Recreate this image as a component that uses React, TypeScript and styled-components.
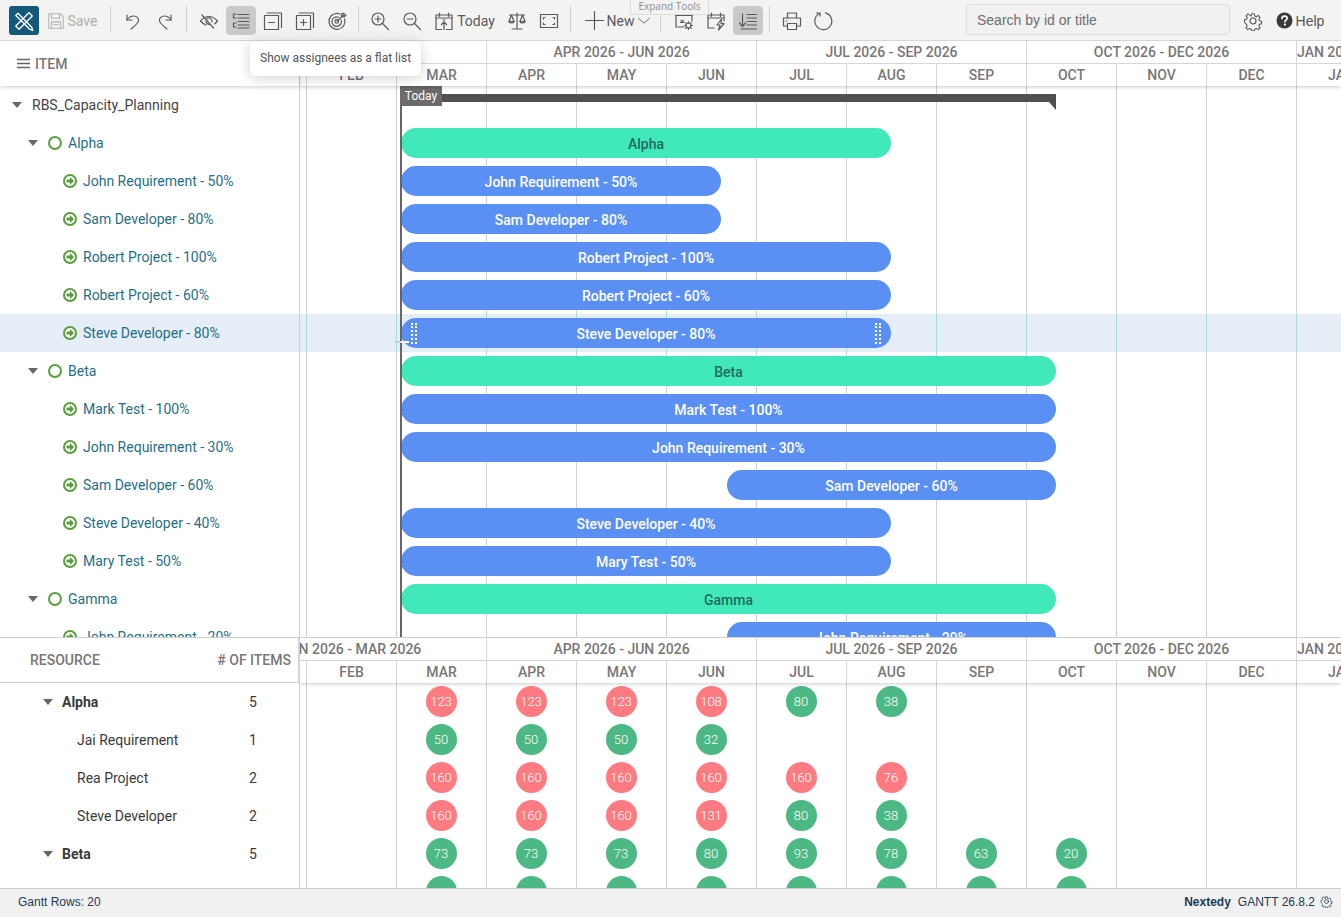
import * as React from "react";
import styled, { createGlobalStyle } from "styled-components";

const GlobalStyle = createGlobalStyle`
  html, body {
    margin: 0;
    padding: 0;
    background: #fff;
    font-family: Roboto, "Liberation Sans", sans-serif;
  }
`;

const Frame = styled.div`
  position: relative;
  width: 1341px;
  height: 917px;
  overflow: hidden;
  display: flex;
  flex-direction: column;
  background: #fff;
`;

/* toolbar */

const Toolbar = styled.header`
  flex: none;
  height: 41px;
  box-sizing: border-box;
  padding: 6px 11px 6px 9px;
  display: flex;
  align-items: flex-start;
  background: #f3f3f1;
  border-bottom: 1px solid #d6d6d4;
`;

const Logo = styled.div`
  width: 30px;
  height: 29px;
  border-radius: 3px;
  background: #14587c;
  display: flex;
  align-items: center;
  justify-content: center;
  margin-right: 2px;
`;

const Group = styled.div`
  display: flex;
  gap: 2px;
`;

const ToolButton = styled.button<{ $active?: boolean; $width?: number }>`
  width: ${(p) => p.$width ?? 30}px;
  height: 29px;
  box-sizing: border-box;
  padding: 0;
  margin: 0;
  display: flex;
  align-items: center;
  justify-content: center;
  gap: 3px;
  border: 1px solid ${(p) => (p.$active ? "#c9c9c9" : "#f1f1ef")};
  border-radius: 4px;
  background: ${(p) => (p.$active ? "#c9c9c9" : "transparent")};
  color: #5a5a5a;
  font: 400 14px Roboto, sans-serif;
`;

const SaveButton = styled(ToolButton)`
  color: #aeaeae;
  border-color: transparent;
  padding-left: 2px;
`;

const NewButton = styled(ToolButton)`
  padding-left: 5px;
`;

const Sep = styled.span<{ $before?: number; $after?: number }>`
  flex: none;
  width: 1px;
  height: 26px;
  background: #cfcfcd;
  margin: 0 ${(p) => p.$after ?? 6}px 0 ${(p) => p.$before ?? 6}px;
`;

const Search = styled.input`
  width: 264px;
  height: 31px;
  box-sizing: border-box;
  margin: -2px 8px 0 auto;
  padding: 0 10px;
  border: 1px solid #dedede;
  border-radius: 4px;
  background: #f1f1f1;
  font: 14px "Liberation Sans", Arial, sans-serif;
  &::placeholder {
    color: #6f6f6f;
    opacity: 1;
  }
`;

const HelpButton = styled(ToolButton)`
  font: 14px "Liberation Sans", Arial, sans-serif;
  color: #555;
`;

const TabHint = styled.div`
  position: absolute;
  left: 630px;
  top: 0;
  width: 79px;
  height: 15px;
  box-sizing: border-box;
  border: 1px solid #dcdcda;
  border-top: none;
  background: #f3f3f1;
  color: #8e8e8e;
  font: 10px/13px "Open Sans", sans-serif;
  text-align: center;
`;

const Tooltip = styled.div`
  position: absolute;
  left: 250px;
  top: 41px;
  width: 171px;
  height: 35px;
  box-sizing: border-box;
  padding: 9px 10px;
  border-radius: 6px;
  background: #fff;
  color: #555;
  font-size: 12px;
  line-height: 16px;
  white-space: nowrap;
  box-shadow: 0 2px 14px rgba(0, 0, 0, 0.18);
  z-index: 9;
`;

/* panes */

const Pane = styled.section<{ $height: number; $topLine?: boolean }>`
  flex: none;
  height: ${(p) => p.$height}px;
  box-sizing: border-box;
  display: flex;
  overflow: hidden;
  border-top: ${(p) => (p.$topLine ? "1px solid #cfcfcf" : "none")};
`;

const LeftColumn = styled.div`
  flex: none;
  width: 300px;
  box-sizing: border-box;
  display: flex;
  flex-direction: column;
  border-right: 1px solid #cfcfcf;
  background: #fff;
  position: relative;
  z-index: 3;
`;

const TimeColumn = styled.div`
  flex: none;
  width: 1041px;
  display: flex;
  flex-direction: column;
`;

const LeftHeader = styled.div<{ $heavy?: boolean }>`
  flex: none;
  height: 45px;
  box-sizing: border-box;
  display: flex;
  align-items: center;
  color: #777;
  font-size: 14px;
  font-weight: 500;
  position: relative;
  z-index: 2;
  background: #fff;
  box-shadow: 0 1px 4px rgba(0, 0, 0, 0.2);
  ${(p) => (p.$heavy ? "border-bottom: 1px solid #d0d0d0; border-right: 2px solid #d4d4d4; margin-right: -1px; box-shadow: none;" : "")}
`;

const ItemHeader = styled(LeftHeader)`
  padding-left: 17px;
  gap: 5px;
`;

const ResourceHeader = styled(LeftHeader)`
  padding: 0 7px 0 30px;
  justify-content: space-between;
`;

const ScaleBlock = styled.div`
  flex: none;
  height: 45px;
  position: relative;
  z-index: 2;
  overflow: hidden;
  background: #fff;
  box-shadow: 0 1px 4px rgba(0, 0, 0, 0.2);
`;

const ScaleRow = styled.div<{ $height: number }>`
  height: ${(p) => p.$height}px;
  box-sizing: border-box;
  display: flex;
  margin-left: -83px;
  width: 1124px;
  overflow: hidden;
`;

const QuarterRow = styled(ScaleRow)`
  border-bottom: 1px solid #d6d6d6;
`;

const ScaleCell = styled.div<{ $width: number; $start?: boolean }>`
  flex: none;
  width: ${(p) => p.$width}px;
  box-sizing: border-box;
  border-right: 1px solid #d6d6d6;
  color: #777;
  font-size: 14px;
  font-weight: 500;
  line-height: 22px;
  white-space: nowrap;
  overflow: hidden;
  text-align: ${(p) => (p.$start ? "left" : "center")};
`;

const TreeBody = styled.div`
  flex: 1;
  overflow: hidden;
`;

const TreeRow = styled.div<{ $indent: number; $selected?: boolean }>`
  height: 38px;
  box-sizing: border-box;
  padding-left: ${(p) => p.$indent}px;
  display: flex;
  align-items: center;
  gap: 6px;
  font-size: 14px;
  color: #1f6f88;
  background: ${(p) => (p.$selected ? "#e5edf6" : "transparent")};
`;

const RootRow = styled(TreeRow)`
  color: #444;
  gap: 10px;
`;

const Caret = styled.span<{ $gap?: number }>`
  flex: none;
  width: 0;
  height: 0;
  border-left: 5.5px solid transparent;
  border-right: 5.5px solid transparent;
  border-top: 6px solid #666;
  margin-right: ${(p) => p.$gap ?? 0}px;
`;

const Ring = styled.span`
  flex: none;
  width: 14px;
  height: 14px;
  box-sizing: border-box;
  border: 2px solid #5a9e3f;
  border-radius: 50%;
`;

const TimeBody = styled.div`
  position: relative;
  flex: 1;
  overflow: hidden;
  background-image: linear-gradient(to right, #d0d0d0 1px, transparent 1px);
  background-size: 90px 100%;
  background-position: 6px 0;
`;

const BarRow = styled.div<{ $selected?: boolean }>`
  height: 38px;
  display: flex;
  align-items: center;
  ${(p) =>
    p.$selected
      ? `background-color: #e5edf6;
         background-image: linear-gradient(to right, #a9dcd8 1px, transparent 1px);
         background-size: 90px 100%;
         background-position: 6px 0;`
      : ""}
`;

const Bar = styled.div<{ $offset: number; $width: number; $kind: "group" | "task" }>`
  position: relative;
  flex: none;
  margin-left: ${(p) => p.$offset}px;
  width: ${(p) => p.$width}px;
  height: 30px;
  border-radius: 15px;
  background: ${(p) => (p.$kind === "group" ? "#41e9ba" : "#5a8ff4")};
  color: ${(p) => (p.$kind === "group" ? "#1d6b5a" : "#fff")};
  font-size: 14px;
  font-weight: 500;
  line-height: 32px;
  text-align: center;
  white-space: nowrap;
`;

const Summary = styled.div`
  position: relative;
  flex: none;
  margin: -14px 0 0 101px;
  width: 655px;
  height: 8px;
  background: #505050;
  &::after {
    content: "";
    position: absolute;
    right: 0;
    top: 8px;
    border-top: 8px solid #505050;
    border-left: 7px solid transparent;
  }
`;

const TodayLine = styled.div`
  position: absolute;
  left: 100px;
  top: 0;
  bottom: 0;
  width: 2px;
  background: #666;
  z-index: 1;
`;

const TodayLabel = styled.div`
  position: absolute;
  left: 100px;
  top: 0;
  width: 42px;
  height: 20px;
  background: #6b6b6b;
  color: #fff;
  font-size: 12px;
  line-height: 21px;
  text-align: center;
  z-index: 1;
`;

const Grip = styled.span<{ $side: "left" | "right" }>`
  position: absolute;
  top: 5px;
  ${(p) => p.$side}: 10px;
  width: 2px;
  height: 21px;
  border-left: 2px dotted #fff;
  border-right: 2px dotted #fff;
`;

const LinkHandle = styled.span`
  position: absolute;
  left: -6px;
  top: 23px;
  width: 14px;
  height: 2px;
  background: linear-gradient(to right, #c9cfd4 45%, #fff 45%);
  z-index: 2;
`;

/* resource table */

const ResourceRow = styled.div<{ $indent: number; $strong?: boolean }>`
  height: 38px;
  box-sizing: border-box;
  padding-left: ${(p) => p.$indent}px;
  display: flex;
  align-items: center;
  font-size: 14px;
  font-weight: ${(p) => (p.$strong ? 700 : 400)};
  color: #3a3a3a;
`;

const ResourceName = styled.span`
  flex: 1;
`;

const ResourceCount = styled.span`
  flex: none;
  width: 50px;
  font-weight: 400;
`;

const HeatBody = styled.div`
  flex: 1;
  overflow: hidden;
  background-image: linear-gradient(to right, #d0d0d0 1px, transparent 1px);
  background-size: 90px 100%;
  background-position: 6px 0;
`;

const HeatRow = styled.div`
  height: 38px;
  display: grid;
  grid-template-columns: 6px repeat(12, 90px);
  align-items: start;
  justify-items: center;
`;

const Dot = styled.div<{ $hot: boolean; $column: number }>`
  grid-column: ${(p) => p.$column};
  grid-row: 1;
  width: 31px;
  height: 31px;
  margin-top: 3px;
  border-radius: 50%;
  background: ${(p) => (p.$hot ? "#ff7b81" : "#4cb883")};
  color: #fff;
  font-size: 13px;
  font-weight: 300;
  line-height: 31px;
  text-align: center;
`;

/* footer */

const Footer = styled.footer`
  flex: none;
  height: 29px;
  box-sizing: border-box;
  padding: 0 8px 3px 18px;
  display: flex;
  align-items: center;
  justify-content: space-between;
  border-top: 1px solid #cfcfcf;
  background: #f1f1f1;
  color: #1d3b52;
  font: 12px "Liberation Sans", Arial, sans-serif;
`;

const FooterRight = styled.div`
  display: flex;
  align-items: center;
  gap: 7px;
`;

const Brand = styled.b`
  font-weight: 700;
`;

const Version = styled.span`
  margin-right: -2px;
`;

/* icons */

const Svg = styled.svg<{ $color?: string }>`
  flex: none;
  display: block;
  fill: none;
  stroke: ${(p) => p.$color ?? "#5a5a5a"};
  stroke-width: 1.2;
  stroke-linecap: round;
  stroke-linejoin: round;
`;

type IconProps = { size?: number; color?: string; children: React.ReactNode };

const Icon = ({ size = 20, color, children }: IconProps) => (
  <Svg width={size} height={size} viewBox="0 0 20 20" $color={color}>
    {children}
  </Svg>
);

const LogoIcon = () => (
  <Icon size={22} color="#fff">
    <path d="M2.500 5l2-2L17 15.700l1 2.800-2.800-1z" />
    <path d="M14.500 2.500l3 3L5.500 17.500l-3-3z" />
  </Icon>
);
const SaveIcon = () => (
  <Icon size={18} color="#b4b4b4">
    <path d="M2 2h13l3 3v13H2z" />
    <path d="M5 2v5h9V2M5 18v-7h10v7M8 14h4" />
  </Icon>
);
const UndoIcon = () => (
  <Icon>
    <path d="M4 4v5h5" />
    <path d="M4 9c2-3 4-4 6.500-4 3.500 0 5.500 2.500 5 5-.5 2.500-5 6-7.500 8" />
  </Icon>
);
const RedoIcon = () => (
  <Icon>
    <path d="M16 4v5h-5" />
    <path d="M16 9c-2-3-4-4-6.500-4C6 5 4 7.500 4.500 10c.5 2.500 5 6 7.500 8" />
  </Icon>
);
const EyeOffIcon = () => (
  <Icon>
    <path d="M6 6.200C7.300 5.700 8.600 5.500 10 5.500c3 0 6 1.500 8.500 4.500-1 1.200-2 2.200-3 3" />
    <path d="M3 4l11.500 13M1.500 10c1.500-1.700 2.500-2.500 3.500-3M1.500 10c1.500 1.800 3.500 3.200 5.500 4" />
    <path d="M8 7.500a3.300 3.300 0 0 1 5 3.500M7 10a3.300 3.300 0 0 0 3.500 3.400" />
  </Icon>
);
const FlatListIcon = () => (
  <Icon>
    <path d="M5 3H2.500v4H5M5 12H2.500v4H5" />
    <path d="M7 3.500h11M7 7h11M7 10.500h11M7 14h11M7 17h11" />
  </Icon>
);
const CollapseIcon = () => (
  <Icon>
    <rect x="1.500" y="4.500" width="14" height="14" />
    <path d="M4 2h14.500v14.500M5.500 11.500h6" />
  </Icon>
);
const ExpandIcon = () => (
  <Icon>
    <rect x="1.500" y="4.500" width="14" height="14" />
    <path d="M4 2h14.500v14.500M5.500 11.500h6M8.500 8.500v6" />
  </Icon>
);
const TargetIcon = () => (
  <Icon>
    <path d="M13 3c-1-.4-2-.6-3-.6a8 8 0 1 0 7.600 5.600" />
    <path d="M11.500 6.200a4.800 4.800 0 1 0 2.700 2.800" />
    <circle cx="9.800" cy="10.400" r="1.800" />
    <path d="M10 10.200L17 3.500M14.500 3v2.800h2.800L19 4h-2V2z" />
  </Icon>
);
const ZoomInIcon = () => (
  <Icon>
    <circle cx="8" cy="8" r="6" />
    <path d="M12.500 12.500L18.500 18.500M5 8h6M8 5v6" />
  </Icon>
);
const ZoomOutIcon = () => (
  <Icon>
    <circle cx="8" cy="8" r="6" />
    <path d="M12.500 12.500L18.500 18.500M5 8h6" />
  </Icon>
);
const CalendarTodayIcon = () => (
  <Icon>
    <path d="M7.500 18.500H2V4h16v14.500h-5.500" />
    <path d="M2 7h16M5.500 2v3.500M14.500 2v3.500M10 18.500V11M7.500 13.500L10 11l2.500 2.500" />
    <path d="M9 9h2" />
  </Icon>
);
const ScalesIcon = () => (
  <Icon>
    <path d="M10 2v15M2.500 4h15M5 18h10" />
    <path d="M4.500 4L2 10.500h5zM15.500 4L13 10.500h5z" />
    <path d="M2 10.500c.5 2 4.500 2 5 0M13 10.500c.5 2 4.500 2 5 0" />
  </Icon>
);
const FullscreenIcon = () => (
  <Icon>
    <rect x="1.500" y="3.500" width="17" height="13" />
    <path d="M4.500 8V6.500H6M14 6.500h1.500V8M15.500 12v1.500H14M6 13.500H4.500V12" />
  </Icon>
);
const PlusIcon = () => (
  <Icon size={19} color="#555">
    <path d="M0.500 10h19M10 .5v19" />
  </Icon>
);
const ChevronIcon = () => (
  <Icon size={14} color="#555">
    <path d="M2 6l8 7 8-7" />
  </Icon>
);
const CalendarGearIcon = () => (
  <Icon>
    <path d="M10 16H2V4h16v6" />
    <path d="M2 4h16" strokeWidth="1.800" />
    <path d="M7 9.500l1 1.500M9 9v2.500M6.500 11.500h3.500" />
    <circle cx="14.500" cy="14.500" r="2.500" />
    <path d="M14.500 10.500v1.500M14.500 17v1.500M10.500 14.500H12M17 14.500h1.500M11.700 11.700l1 1M16.300 16.300l1 1M17.300 11.700l-1 1M12.700 16.300l-1 1" />
  </Icon>
);
const CalendarFlashIcon = () => (
  <Icon>
    <path d="M8 17H2V4h16v6" />
    <path d="M2 7h15M5.500 2v3.500M14.500 2v3.500" />
    <path d="M15.500 8L11 14h3l-1.500 5L18 12.500h-3z" />
  </Icon>
);
const SortListIcon = () => (
  <Icon>
    <path d="M4.500 3v12M1.500 12l3 3.500 3-3.500" />
    <path d="M9 3.500h9.500M9 7h9.500M9 10.500h9.500M9 14h9.500M3 18h15.500" />
  </Icon>
);
const PrintIcon = () => (
  <Icon>
    <path d="M5.500 7V2h9v5" />
    <path d="M5 15H1.500V7h17v8H15" />
    <rect x="5.500" y="12.500" width="9" height="6" />
    <path d="M4 10h1" />
  </Icon>
);
const RefreshIcon = () => (
  <Icon>
    <path d="M5.500 2.500a8.500 8.500 0 1 0 6-.6" />
    <path d="M2.500 2h3.500v3" />
  </Icon>
);
const GearIcon = ({ size = 20, color }: { size?: number; color?: string }) => (
  <Icon size={size} color={color}>
    <circle cx="10" cy="10" r="3" />
    <path d="M8.500 2h3l.5 2.500 1.700.7 2.100-1.400 2.100 2.100-1.400 2.100.7 1.700 2.300.5v3l-2.300.5-.7 1.700 1.400 2.100-2.100 2.100-2.100-1.400-1.700.7-.5 2.100h-3l-.5-2.100-1.700-.7-2.100 1.400-2.100-2.100 1.400-2.100-.7-1.700L.6 11.500v-3l2.300-.5.7-1.700-1.400-2.100 2.100-2.100 2.100 1.400L8 4.500z" transform="translate(1 1) scale(.9)" />
  </Icon>
);
const HelpIcon = () => (
  <Svg width={17} height={17} viewBox="0 0 17 17" style={{ stroke: "none" }}>
    <circle cx="8.500" cy="8.500" r="8" fill="#3a3a3a" />
    <path d="M6 6.500c0-1.500 1.100-2.400 2.600-2.400s2.500.9 2.500 2.100c0 1.900-2.200 1.800-2.200 3.600" fill="none" stroke="#fff" strokeWidth="1.700" />
    <circle cx="8.900" cy="12.600" r="1.100" fill="#fff" />
  </Svg>
);
const MenuIcon = () => (
  <Svg width={13} height={11} viewBox="0 0 13 11" $color="#666" style={{ strokeWidth: 1.6 }}>
    <path d="M0 1.500h13M0 5.500h13M0 9.500h13" />
  </Svg>
);
const TaskIcon = () => (
  <Svg width={14} height={14} viewBox="0 0 14 14" $color="#5a9e3f" style={{ strokeWidth: 2 }}>
    <circle cx="7" cy="7" r="6" fill="#fff" />
    <path d="M3.500 5.500H7V3l4 4-4 4V8.500H3.500z" fill="#5a9e3f" stroke="none" />
  </Svg>
);

/* data */

const quarters = ["JAN 2026 - MAR 2026", "APR 2026 - JUN 2026", "JUL 2026 - SEP 2026", "OCT 2026 - DEC 2026"];
const months = ["JAN", "FEB", "MAR", "APR", "MAY", "JUN", "JUL", "AUG", "SEP", "OCT", "NOV", "DEC", "JAN"];

type GanttRow = { name: string; kind: "group" | "task"; offset: number; width: number; selected?: boolean };

const ganttRows: GanttRow[] = [
  { name: "Alpha", kind: "group", offset: 101, width: 490 },
  { name: "John Requirement - 50%", kind: "task", offset: 101, width: 320 },
  { name: "Sam Developer - 80%", kind: "task", offset: 101, width: 320 },
  { name: "Robert Project - 100%", kind: "task", offset: 101, width: 490 },
  { name: "Robert Project - 60%", kind: "task", offset: 101, width: 490 },
  { name: "Steve Developer - 80%", kind: "task", offset: 101, width: 490, selected: true },
  { name: "Beta", kind: "group", offset: 101, width: 655 },
  { name: "Mark Test - 100%", kind: "task", offset: 101, width: 655 },
  { name: "John Requirement - 30%", kind: "task", offset: 101, width: 655 },
  { name: "Sam Developer - 60%", kind: "task", offset: 427, width: 329 },
  { name: "Steve Developer - 40%", kind: "task", offset: 101, width: 490 },
  { name: "Mary Test - 50%", kind: "task", offset: 101, width: 490 },
  { name: "Gamma", kind: "group", offset: 101, width: 655 },
  { name: "John Requirement - 20%", kind: "task", offset: 427, width: 329 },
];

type ResourceData = { name: string; count: number; strong?: boolean; hot: number; values: (number | null)[] };

const resources: ResourceData[] = [
  { name: "Alpha", count: 5, strong: true, hot: 4, values: [123, 123, 123, 108, 80, 38] },
  { name: "Jai Requirement", count: 1, hot: 0, values: [50, 50, 50, 32] },
  { name: "Rea Project", count: 2, hot: 6, values: [160, 160, 160, 160, 160, 76] },
  { name: "Steve Developer", count: 2, hot: 4, values: [160, 160, 160, 131, 80, 38] },
  { name: "Beta", count: 5, strong: true, hot: 0, values: [73, 73, 73, 80, 93, 78, 63, 20] },
  { name: "", count: 0, hot: 0, values: [null, null, null, null, null, null, null, null] },
];

const TimeScale = () => (
  <ScaleBlock>
    <QuarterRow $height={23}>
      {quarters.map((q) => (
        <ScaleCell key={q} $width={270}>
          {q}
        </ScaleCell>
      ))}
      <ScaleCell $width={90} $start>
        JAN 2027
      </ScaleCell>
    </QuarterRow>
    <ScaleRow $height={22}>
      {months.map((m, i) => (
        <ScaleCell key={i} $width={90}>
          {m}
        </ScaleCell>
      ))}
    </ScaleRow>
  </ScaleBlock>
);

export default function App() {
  return (
    <Frame>
      <GlobalStyle />
      <Toolbar>
        <Logo>
          <LogoIcon />
        </Logo>
        <SaveButton $width={60}>
          <SaveIcon />
          Save
        </SaveButton>
        <Sep $before={9} $after={7} />
        <Group>
          <ToolButton><UndoIcon /></ToolButton>
          <ToolButton><RedoIcon /></ToolButton>
        </Group>
        <Sep $after={7} />
        <Group>
          <ToolButton><EyeOffIcon /></ToolButton>
          <ToolButton $active><FlatListIcon /></ToolButton>
          <ToolButton><CollapseIcon /></ToolButton>
          <ToolButton><ExpandIcon /></ToolButton>
          <ToolButton><TargetIcon /></ToolButton>
        </Group>
        <Sep />
        <Group>
          <ToolButton><ZoomInIcon /></ToolButton>
          <ToolButton><ZoomOutIcon /></ToolButton>
          <ToolButton $width={71}>
            <CalendarTodayIcon />
            Today
          </ToolButton>
          <ToolButton><ScalesIcon /></ToolButton>
          <ToolButton><FullscreenIcon /></ToolButton>
        </Group>
        <Sep />
        <NewButton $width={77}>
          <PlusIcon />
          New
          <ChevronIcon />
        </NewButton>
        <Sep $after={8} />
        <Group>
          <ToolButton><CalendarGearIcon /></ToolButton>
          <ToolButton><CalendarFlashIcon /></ToolButton>
          <ToolButton $active><SortListIcon /></ToolButton>
        </Group>
        <Sep $after={7} />
        <Group>
          <ToolButton><PrintIcon /></ToolButton>
          <ToolButton><RefreshIcon /></ToolButton>
        </Group>
        <Search placeholder="Search by id or title" readOnly />
        <Group>
          <ToolButton><GearIcon /></ToolButton>
          <HelpButton $width={60}>
            <HelpIcon />
            Help
          </HelpButton>
        </Group>
      </Toolbar>
      <TabHint>Expand Tools</TabHint>
      <Tooltip>Show assignees as a flat list</Tooltip>

      <Pane $height={596}>
        <LeftColumn>
          <ItemHeader>
            <MenuIcon />
            ITEM
          </ItemHeader>
          <TreeBody>
            <RootRow $indent={12}>
              <Caret />
              RBS_Capacity_Planning
            </RootRow>
            {ganttRows.map((row, i) =>
              row.kind === "group" ? (
                <TreeRow key={i} $indent={28}>
                  <Caret $gap={4} />
                  <Ring />
                  {row.name}
                </TreeRow>
              ) : (
                <TreeRow key={i} $indent={63} $selected={row.selected}>
                  <TaskIcon />
                  {row.name}
                </TreeRow>
              )
            )}
          </TreeBody>
        </LeftColumn>
        <TimeColumn>
          <TimeScale />
          <TimeBody>
            <TodayLine />
            <TodayLabel>Today</TodayLabel>
            <BarRow>
              <Summary />
            </BarRow>
            {ganttRows.map((row, i) => (
              <BarRow key={i} $selected={row.selected}>
                <Bar $offset={row.offset} $width={row.width} $kind={row.kind}>
                  {row.name}
                  {row.selected && (
                    <>
                      <Grip $side="left" />
                      <Grip $side="right" />
                      <LinkHandle />
                    </>
                  )}
                </Bar>
              </BarRow>
            ))}
          </TimeBody>
        </TimeColumn>
      </Pane>

      <Pane $height={251} $topLine>
        <LeftColumn>
          <ResourceHeader $heavy>
            <span>RESOURCE</span>
            <span># OF ITEMS</span>
          </ResourceHeader>
          <TreeBody>
            {resources.map((r, i) => (
              <ResourceRow key={i} $indent={r.strong ? 43 : 77} $strong={r.strong}>
                {r.strong && <Caret $gap={9} />}
                <ResourceName>{r.name}</ResourceName>
                <ResourceCount>{r.name ? r.count : ""}</ResourceCount>
              </ResourceRow>
            ))}
          </TreeBody>
        </LeftColumn>
        <TimeColumn>
          <TimeScale />
          <HeatBody>
            {resources.map((r, i) => (
              <HeatRow key={i}>
                {r.values.map((v, j) => (
                  <Dot key={j} $hot={j < r.hot} $column={j + 3}>
                    {v}
                  </Dot>
                ))}
              </HeatRow>
            ))}
          </HeatBody>
        </TimeColumn>
      </Pane>

      <Footer>
        <span>Gantt Rows: 20</span>
        <FooterRight>
          <Brand>Nextedy</Brand>
          <Version>GANTT 26.8.2</Version>
          <GearIcon size={13} color="#1d3b52" />
        </FooterRight>
      </Footer>
    </Frame>
  );
}
